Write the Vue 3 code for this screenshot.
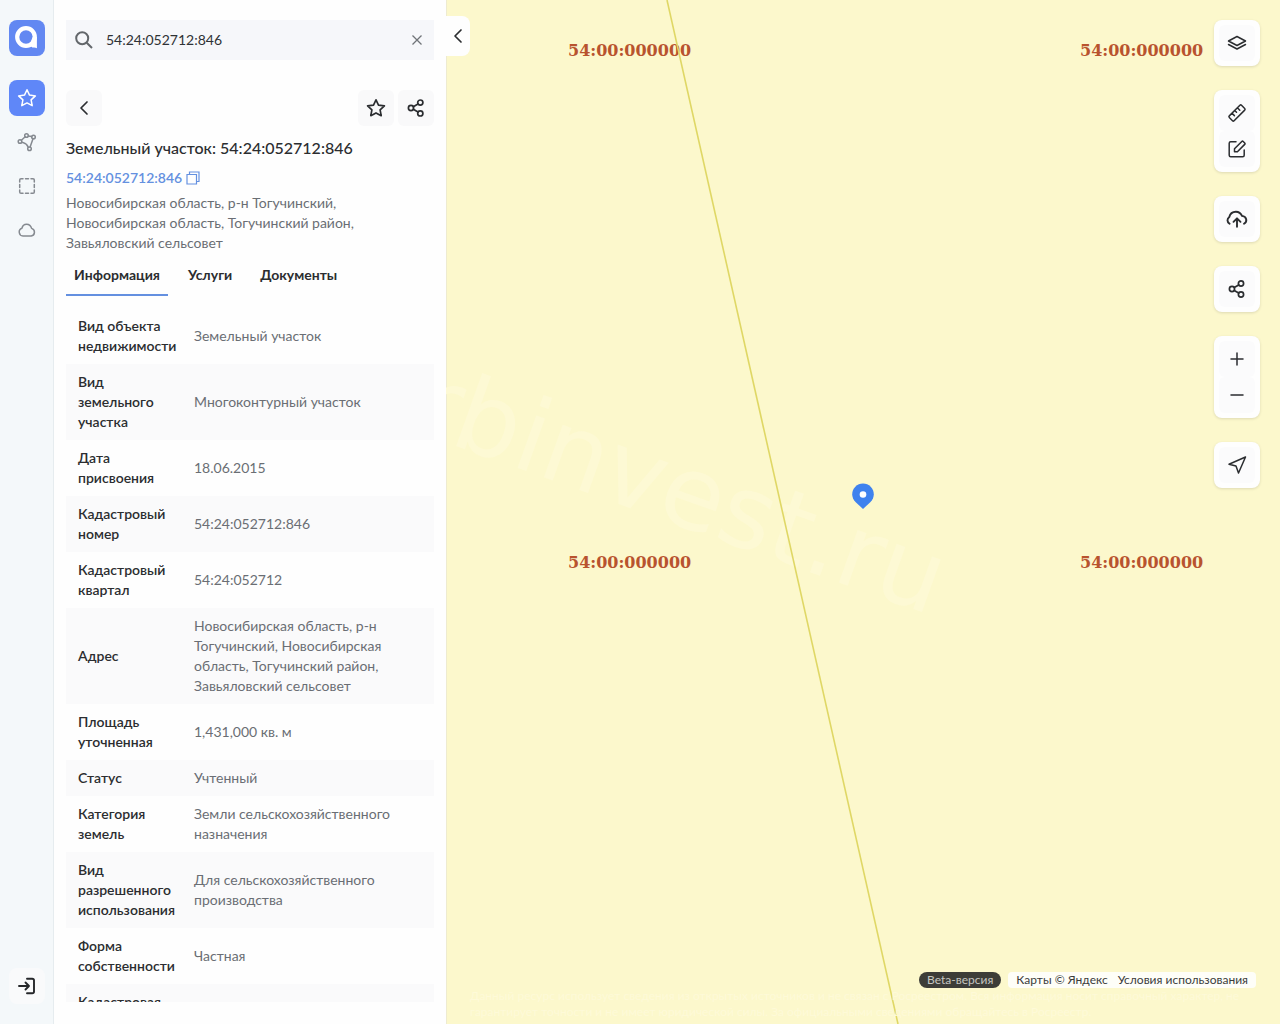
<script setup>
import { ref } from 'vue'

const query = ref('54:24:052712:846')
const tabs = ['Информация', 'Услуги', 'Документы']
const activeTab = ref('Информация')

const rows = [
  ['Вид объекта\nнедвижимости', 'Земельный участок'],
  ['Вид\nземельного\nучастка', 'Многоконтурный участок'],
  ['Дата\nприсвоения', '18.06.2015'],
  ['Кадастровый\nномер', '54:24:052712:846'],
  ['Кадастровый\nквартал', '54:24:052712'],
  ['Адрес', 'Новосибирская область, р-н\nТогучинский, Новосибирская\nобласть, Тогучинский район,\nЗавьяловский сельсовет'],
  ['Площадь\nуточненная', '1,431,000 кв. м'],
  ['Статус', 'Учтенный'],
  ['Категория\nземель', 'Земли сельскохозяйственного\nназначения'],
  ['Вид\nразрешенного\nиспользования', 'Для сельскохозяйственного\nпроизводства'],
  ['Форма\nсобственности', 'Частная'],
  ['Кадастровая\nстоимость', '']
]

const labels = [
  { x: 122, y: 56 },
  { x: 634, y: 56 },
  { x: 122, y: 568 },
  { x: 634, y: 568 }
]
</script>

<template>
  <div class="app">
    <nav class="rail" aria-label="Разделы">
      <a class="logo" href="#" aria-label="Главная">
        <svg width="36" height="36" viewBox="0 0 36 36">
          <circle cx="17" cy="17" r="8.800" fill="none" stroke="#fff" stroke-width="4.200" />
          <path d="M23.700 17h4.200v11.200q-1.800-1.200-4.500-.6l-3-2.600z" fill="#fff" />
        </svg>
      </a>
      <button class="rail-btn active" aria-label="Избранное">
        <svg width="20" height="20" viewBox="0 0 20 20" class="stroke"><path d="M10 1.800l2.500 5.300 5.900.8-4.300 4 1.100 5.800L10 14.900l-5.200 2.800 1.100-5.800-4.300-4 5.900-.8z" /></svg>
      </button>
      <button class="rail-btn" aria-label="Многоугольник">
        <svg width="20" height="20" viewBox="0 0 20 20" class="stroke">
          <circle cx="9.500" cy="3.500" r="1.800" /><circle cx="16.500" cy="5" r="1.800" /><circle cx="3" cy="9.500" r="1.800" /><circle cx="12.500" cy="16.800" r="1.800" />
          <path d="M11.300 3.900l3.400.7M8.200 4.800L4.400 8.200M16 6.800l-2.900 8.200M4.700 10.300l1.800.5c2.200.6 3.700 2 4.700 4.300" />
        </svg>
      </button>
      <button class="rail-btn" aria-label="Область">
        <svg width="20" height="20" viewBox="0 0 20 20" class="stroke">
          <path d="M2.700 6V4q0-1.300 1.300-1.300h2M14 2.700h2q1.300 0 1.300 1.300v2M17.300 14v2q0 1.300-1.300 1.300h-2M6 17.300H4q-1.300 0-1.300-1.300v-2M8.500 2.700h3M8.500 17.300h3M2.700 8.500v3M17.300 8.500v3" />
        </svg>
      </button>
      <button class="rail-btn" aria-label="Облако">
        <svg width="20" height="20" viewBox="0 0 20 20" class="stroke"><path d="M6 16a4 4 0 0 1-1-7.800C5.500 5.500 7.500 4.200 9.600 4.200c2.400 0 4.300 1.500 5 4.200a3.900 3.900 0 0 1-.4 7.600z" /></svg>
      </button>
      <button class="rail-btn login" aria-label="Войти">
        <svg width="20" height="20" viewBox="0 0 20 20" class="stroke heavy"><path d="M2 10h10M8.500 6.500L12 10l-3.500 3.500M10 2.800h5.200q1.800 0 1.800 1.800v10.800q0 1.800-1.800 1.800H10" /></svg>
      </button>
    </nav>

    <aside class="panel">
      <form class="search" @submit.prevent>
        <svg width="20" height="20" viewBox="0 0 20 20" class="search-icon"><circle cx="8.200" cy="8.200" r="6" /><path d="M12.700 12.700l5.300 5.300" /></svg>
        <input v-model="query" aria-label="Поиск" type="text" />
        <button type="button" aria-label="Очистить" @click="query = ''">
          <svg width="12" height="12" viewBox="0 0 12 12"><path d="M1.500 1.500l9 9M10.500 1.500l-9 9" /></svg>
        </button>
      </form>

      <div class="actions">
        <button aria-label="Назад"><svg width="20" height="20" viewBox="0 0 20 20" class="stroke mid"><path d="M13 4l-6 6 6 6" /></svg></button>
        <span class="spacer"></span>
        <button aria-label="В избранное">
          <svg width="20" height="20" viewBox="0 0 20 20" class="stroke mid"><path d="M10 1.800l2.500 5.300 5.900.8-4.300 4 1.100 5.800L10 14.900l-5.200 2.800 1.100-5.800-4.300-4 5.900-.8z" /></svg>
        </button>
        <button aria-label="Поделиться">
          <svg width="20" height="20" viewBox="0 0 20 20" class="stroke mid"><circle cx="14.300" cy="4.600" r="2.600" /><circle cx="5" cy="10" r="2.600" /><circle cx="14.300" cy="15.400" r="2.600" /><path d="M7.300 8.700L12 5.900M7.300 11.300l4.700 2.800" /></svg>
        </button>
      </div>

      <h1>Земельный участок: 54:24:052712:846</h1>
      <div class="number">
        <a href="#">54:24:052712:846</a>
        <button aria-label="Копировать">
          <svg width="14" height="14" viewBox="0 0 14 14"><path d="M1 3.500h9.500V13H1zM3.500 3.500V1H13v9.500h-2.500" /></svg>
        </button>
      </div>
      <p class="address">Новосибирская область, р-н Тогучинский,<br />Новосибирская область, Тогучинский район,<br />Завьяловский сельсовет</p>

      <div class="tabs" role="tablist">
        <button v-for="tab in tabs" :key="tab" role="tab" :aria-selected="tab === activeTab" :class="{ current: tab === activeTab }" @click="activeTab = tab">{{ tab }}</button>
      </div>

      <div class="details">
        <table>
          <tbody>
            <tr v-for="row in rows" :key="row[0]">
              <th scope="row">{{ row[0] }}</th>
              <td>{{ row[1] }}</td>
            </tr>
          </tbody>
        </table>
      </div>
    </aside>

    <main class="map">
      <svg class="canvas" width="100%" height="100%">
        <text class="watermark" transform="translate(-38 429) rotate(19.600)">rbinvest.ru</text>
        <text v-for="label in labels" :key="label.x + '-' + label.y" class="quarter" :x="label.x" :y="label.y">54:00:000000</text>
        <path d="M221 0L452 1024" stroke="#dfd765" stroke-width="1.600" />
        <g transform="translate(417 510)">
          <path d="M0-1L-7.500-8A10.800 10.800 0 1 1 7.500-8Z" fill="#3f82ee" />
          <circle cx="0" cy="-15.500" r="3.300" fill="#fff" />
        </g>
      </svg>

      <button class="collapse" aria-label="Свернуть панель">
        <svg width="20" height="20" viewBox="0 0 20 20" class="stroke mid"><path d="M13 4l-6 6 6 6" /></svg>
      </button>

      <div class="tools">
        <div class="group">
          <button aria-label="Слои"><svg width="20" height="20" viewBox="0 0 20 20" class="stroke"><path d="M10 3.500l8.500 4.500L10 12.500 1.500 8zM1.500 11.500L10 16l8.500-4.500" /></svg></button>
        </div>
        <div class="group">
          <button aria-label="Линейка"><svg width="20" height="20" viewBox="0 0 20 20" class="stroke"><path d="M2.300 12.900L12.900 2.300q.8-.8 1.600 0l3.200 3.200q.8.800 0 1.600L7.100 17.700q-.8.800-1.600 0l-3.200-3.200q-.8-.8 0-1.600zM5 10.200l2.400 2.400M7.700 7.500l1.800 1.800M10.400 4.800l2.400 2.400" /></svg></button>
          <button aria-label="Рисование"><svg width="20" height="20" viewBox="0 0 20 20" class="stroke"><path d="M9 2.800H3.700q-1.500 0-1.500 1.500v12q0 1.500 1.500 1.500h12q1.500 0 1.500-1.500V11M7.500 12.800V9.800l7.300-7.300q.7-.7 1.400 0l1.500 1.500q.7.700 0 1.400l-7.300 7.400z" /></svg></button>
        </div>
        <div class="group">
          <button aria-label="Загрузить"><svg width="22" height="20" viewBox="0 0 22 20" class="stroke heavy"><path d="M3.600 14.800C.9 13 .8 9.800 3.300 8 4 4.800 6.800 2.700 9.900 2.700c2.900 0 5 1.600 6.100 4.200 4.700.6 5.800 5.500 2 7.900M11 17.800V9.700M7.500 12.800L11 9.300l3.500 3.500" /></svg></button>
        </div>
        <div class="group">
          <button aria-label="Поделиться картой"><svg width="20" height="20" viewBox="0 0 20 20" class="stroke mid"><circle cx="14" cy="4.500" r="2.600" /><circle cx="5" cy="10" r="2.600" /><circle cx="14" cy="15.500" r="2.600" /><path d="M7.200 8.600l4.500-2.700M7.200 11.400l4.500 2.700" /></svg></button>
        </div>
        <div class="group">
          <button aria-label="Приблизить"><svg width="20" height="20" viewBox="0 0 20 20" class="stroke"><path d="M4 10h12M10 4v12" /></svg></button>
          <button aria-label="Отдалить"><svg width="20" height="20" viewBox="0 0 20 20" class="stroke"><path d="M4 10h12" /></svg></button>
        </div>
        <div class="group">
          <button aria-label="Моё местоположение"><svg width="20" height="20" viewBox="0 0 20 20" class="stroke"><path d="M18.500 2L2 9.300l7 1.700 2.500 7z" /></svg></button>
        </div>
      </div>

      <footer class="footer">
        <div class="credits">
          <span class="beta">Beta-версия</span>
          <span class="terms"><a href="#">Карты © Яндекс</a><a href="#">Условия использования</a></span>
        </div>
        <p class="notice">Данный ресурс использует сведения из открытых источников и не связан с Росреестром. Вся информация носит справочный характер, не<br />гарантирует точности и не имеет юридической силы. За официальными сведениями обращайтесь в Росреестр.</p>
      </footer>
    </main>
  </div>
</template>

<style>
body {
  margin: 0;
}
</style>

<style scoped>
* {
  box-sizing: border-box;
}
.app {
  display: flex;
  height: 100vh;
  overflow: hidden;
  font: 14px/20px Lato, 'Liberation Sans', sans-serif;
  color: #2b2d30;
}
button {
  display: flex;
  align-items: center;
  justify-content: center;
  padding: 0;
  border: 0;
  background: none;
  color: inherit;
  font: inherit;
  cursor: pointer;
}
a {
  color: inherit;
  text-decoration: none;
}
svg {
  display: block;
  flex: none;
}
.stroke {
  fill: none;
  stroke: currentColor;
  stroke-width: 1.5px;
  stroke-linecap: round;
  stroke-linejoin: round;
}
.mid {
  stroke-width: 1.7px;
}
.heavy {
  stroke-width: 1.9px;
}

.rail {
  flex: none;
  display: flex;
  flex-direction: column;
  align-items: center;
  gap: 8px;
  width: 54px;
  padding: 20px 0;
  background: #f4f8fa;
  border-right: 1px solid #e6ecef;
}
.logo {
  width: 36px;
  height: 36px;
  margin-bottom: 16px;
  border-radius: 8px;
  background: #6288f2;
}
.rail-btn {
  width: 36px;
  height: 36px;
  border-radius: 8px;
  color: #858a90;
}
.rail-btn.active {
  background: #5f87f8;
  color: #fff;
}
.rail-btn.login {
  margin-top: auto;
  background: #f9fafb;
  color: #25272a;
}

.panel {
  flex: none;
  display: flex;
  flex-direction: column;
  width: 392px;
  padding: 20px 12px 22px;
  background: #fefefe;
}
.search {
  display: flex;
  align-items: center;
  height: 40px;
  padding: 0 11px 0 8px;
  background: #f6f7fa;
}
.search input {
  flex: 1;
  min-width: 0;
  padding: 0 0 0 12px;
  border: 0;
  outline: 0;
  background: none;
  color: #2f3235;
  font: inherit;
}
.search-icon {
  fill: none;
  stroke: #63676b;
  stroke-width: 2px;
}
.search button svg {
  fill: none;
  stroke: #707478;
  stroke-width: 1.3px;
}
.actions {
  display: flex;
  gap: 4px;
  margin-top: 30px;
}
.actions button {
  width: 36px;
  height: 36px;
  border-radius: 6px;
  background: #f9f9fa;
}
.spacer {
  flex: 1;
}
h1 {
  margin: 10px 0 0;
  font-size: 16px;
  line-height: 24px;
  font-weight: 500;
}
.number {
  display: flex;
  align-items: center;
  gap: 4px;
  margin-top: 8px;
  color: #6490e0;
  font-weight: 600;
}
.number svg {
  fill: none;
  stroke: currentColor;
  stroke-width: 1.2px;
}
.address {
  margin: 5px 0 0;
  color: #6a6e74;
}
.tabs {
  display: flex;
  gap: 12px;
  margin-top: 3px;
}
.tabs button {
  height: 40px;
  padding: 0 8px;
  border-bottom: 2px solid transparent;
  font-weight: 700;
}
.tabs button.current {
  border-color: #6490e0;
}
.details {
  flex: 1;
  min-height: 0;
  margin-top: 12px;
  overflow: hidden;
}
table {
  width: 100%;
  border-collapse: collapse;
  table-layout: fixed;
}
tr:nth-child(even) {
  background: #fafafb;
}
th,
td {
  padding: 8px 12px;
  white-space: pre-line;
  text-align: left;
  vertical-align: middle;
}
th {
  width: 116px;
  padding-right: 0;
  font-weight: 600;
}
td {
  color: #6a6e74;
}

.map {
  position: relative;
  flex: 1;
  min-width: 0;
  background: #fcf8cc;
  box-shadow: inset 1px 0 #eeebd0;
}
.canvas {
  overflow: hidden;
}
.quarter {
  fill: #b8532e;
  font: bold 16px 'DejaVu Serif', serif;
}
.watermark {
  fill: #fdf9d4;
  font: 102px 'DejaVu Sans', sans-serif;
}
.collapse {
  position: absolute;
  top: 16px;
  left: 0;
  width: 24px;
  height: 40px;
  border-radius: 0 8px 8px 0;
  background: #fefefe;
}
.tools {
  position: absolute;
  top: 20px;
  right: 20px;
  display: flex;
  flex-direction: column;
  gap: 24px;
}
.group {
  padding: 5px;
  border-radius: 8px;
  background: #fefefe;
  box-shadow: 0 1px 3px #00000020;
}
.group button {
  width: 36px;
  height: 36px;
  border-radius: 6px;
  background: #fbfbfc;
}
.footer {
  position: absolute;
  left: 24px;
  right: 24px;
  bottom: 4px;
  font-size: 12px;
  line-height: 16px;
}
.credits {
  display: flex;
  justify-content: flex-end;
  gap: 7px;
  color: #3b3c3c;
}
.beta {
  padding: 0 8px;
  border-radius: 8px;
  background: #3d3d38;
  color: #c6c6c1;
}
.terms {
  display: flex;
  gap: 10px;
  padding: 0 8px;
  border-radius: 4px;
  background: #fefef8;
}
.notice {
  margin: 0;
  color: #fefad8;
  white-space: nowrap;
}
</style>
